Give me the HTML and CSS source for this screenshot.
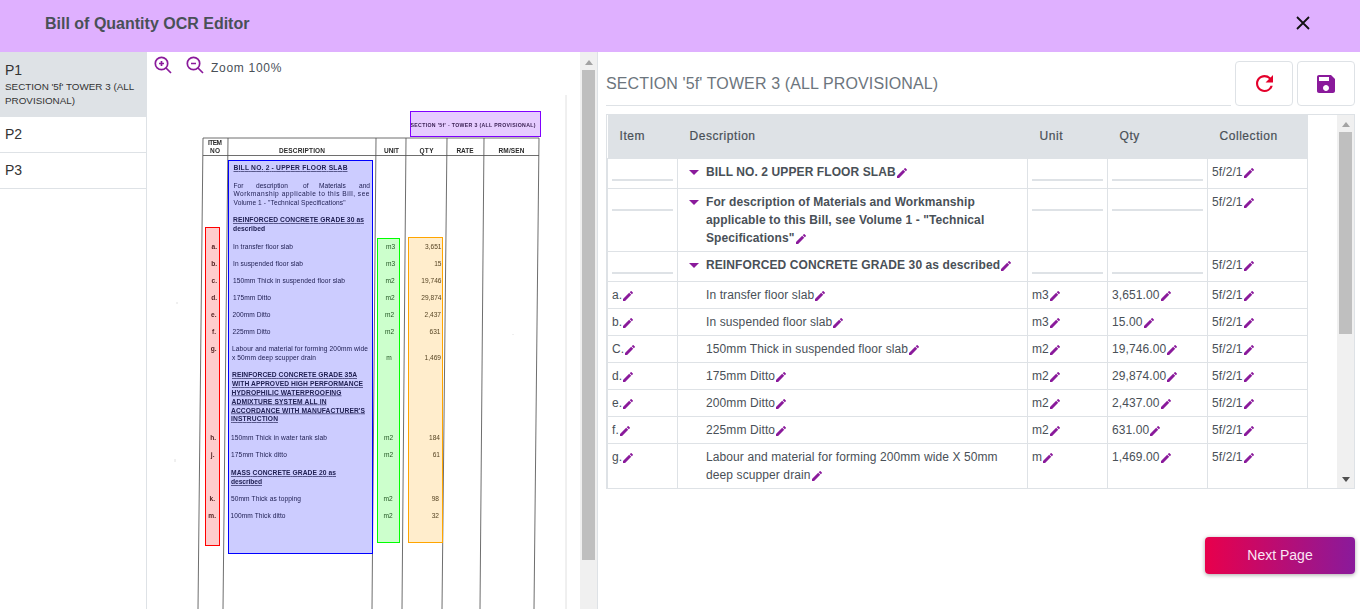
FILE: index.html
```html
<!DOCTYPE html>
<html lang="en">
<head>
<meta charset="utf-8">
<title>Bill of Quantity OCR Editor</title>
<link rel="stylesheet" href="styles.css">
</head>
<body>
<svg class="defs" width="0" height="0" aria-hidden="true">
  <symbol id="pen" viewBox="3 3 18 18"><path d="M20.71 7.04c.39-.39.39-1.04 0-1.41l-2.34-2.34c-.37-.39-1.02-.39-1.41 0l-1.84 1.83 3.75 3.75M3 17.25V21h3.75L17.81 9.93l-3.75-3.75L3 17.25z"/></symbol>
</svg>
<header class="topbar">
  <h1 class="title">Bill of Quantity OCR Editor</h1>
  <svg class="close" viewBox="0 0 14 14"><path d="M1 1l12 12M13 1L1 13"/></svg>
</header>
<main class="main">
  <nav class="pages">
    <div class="page active"><div class="page-no">P1</div><div class="page-sub">SECTION '5f' TOWER 3 (ALL PROVISIONAL)</div></div>
    <div class="page"><div class="page-no">P2</div></div>
    <div class="page"><div class="page-no">P3</div></div>
  </nav>
  <section class="viewer">
    <div class="canvas">
      <div class="zoombar">
        <svg class="zi" viewBox="0 0 18 18"><circle cx="7.5" cy="7.5" r="6.2"/><path d="M12 12l5 5M7.5 5v5M5 7.5h5"/></svg>
        <svg class="zi" viewBox="0 0 18 18"><circle cx="7.5" cy="7.5" r="6.2"/><path d="M12 12l5 5M5 7.5h5"/></svg>
        <span class="zoomtext">Zoom 100%</span>
      </div>
      <svg class="doc" viewBox="147 52 433 557" width="433" height="557">
        <g class="rules">
          <path d="M203 138H539M203 155.5H539"/>
          <path d="M203 138L198 609M228 138L223 609M376 138L372 609M406 138L402 609M447 138L442 609M484 138L480 609M539 138L534 609"/>
        </g>
        <path class="faint" d="M566 95V609M177 302v2M175 459v3M513 334v1"/>
        <g class="scan">
          <text class="sp" x="410.5" y="127" textLength="125">SECTION '5f' - TOWER 3 (ALL PROVISIONAL)</text>
          <text class="sb" x="208" y="144.5" textLength="14">ITEM</text>
          <text class="sb" x="210" y="153" textLength="10">NO</text>
          <text class="sb" x="279" y="153" textLength="46">DESCRIPTION</text>
          <text class="sb" x="384" y="153" textLength="15">UNIT</text>
          <text class="sb" x="419.5" y="153" textLength="14">QTY</text>
          <text class="sb" x="456.5" y="153" textLength="17">RATE</text>
          <text class="sb" x="498.5" y="153" textLength="26">RM/SEN</text>

          <text class="dh" x="233.5" y="170" textLength="114">BILL NO. 2 - UPPER FLOOR SLAB</text>
          <text class="dt" y="187.5"><tspan x="233.5">For</tspan><tspan x="256">description</tspan><tspan x="303">of</tspan><tspan x="319">Materials</tspan><tspan x="359">and</tspan></text>
          <text class="dt" x="233.5" y="196" textLength="136">Workmanship applicable to this Bill, see</text>
          <text class="dt" x="233.5" y="204.5" textLength="112">Volume 1 - "Technical Specifications"</text>
          <text class="dh" x="233" y="222" textLength="131">REINFORCED CONCRETE GRADE 30 as</text>
          <text class="dh" x="233" y="231" textLength="32">described</text>
          <g transform="translate(0 1)">
          <text class="dt" x="233" y="248" textLength="60">In transfer floor slab</text>
          <text class="dt" x="233" y="265" textLength="70">In suspended floor slab</text>
          <text class="dt" x="233" y="282" textLength="112">150mm Thick in suspended floor slab</text>
          <text class="dt" x="233" y="299" textLength="38">175mm Ditto</text>
          <text class="dt" x="232.5" y="316" textLength="38">200mm Ditto</text>
          <text class="dt" x="232.5" y="333" textLength="38">225mm Ditto</text>
          <text class="dt" x="232" y="350" textLength="136">Labour and material for forming 200mm wide</text>
          <text class="dt" x="232" y="359" textLength="84">x 50mm deep scupper drain</text>
          <text class="dh" x="232" y="376" textLength="125">REINFORCED CONCRETE GRADE 35A</text>
          <text class="dh" x="232" y="385" textLength="131">WITH APPROVED HIGH PERFORMANCE</text>
          <text class="dh" x="231.5" y="393.5" textLength="110">HYDROPHILIC WATERPROOFING</text>
          <text class="dh" x="231.5" y="402.5" textLength="95">ADMIXTURE SYSTEM ALL IN</text>
          <text class="dh" x="231" y="411.5" textLength="134">ACCORDANCE WITH MANUFACTURER'S</text>
          <text class="dh" x="231" y="420" textLength="47">INSTRUCTION</text>
          <text class="dt" x="231" y="439" textLength="96">150mm Thick in water tank slab</text>
          <text class="dt" x="231" y="456" textLength="56">175mm Thick ditto</text>
          <text class="dh" x="231" y="474" textLength="105">MASS CONCRETE GRADE 20 as</text>
          <text class="dh" x="231" y="483" textLength="31">described</text>
          <text class="dt" x="231" y="500" textLength="70">50mm Thick as topping</text>
          <text class="dt" x="230.5" y="517" textLength="55">100mm Thick ditto</text>

          <g class="it">
            <text x="217" y="248">a.</text><text x="217" y="265">b.</text><text x="217" y="282">c.</text><text x="217" y="299">d.</text>
            <text x="216.5" y="316">e.</text><text x="216" y="333">f.</text><text x="216.5" y="350">g.</text><text x="216" y="439">h.</text>
            <text x="214.5" y="456">j.</text><text x="215" y="500">k.</text><text x="216" y="517">m.</text>
          </g>
          <g class="un">
            <text x="390.5" y="248">m3</text><text x="390.5" y="265">m3</text><text x="390" y="282">m2</text><text x="390" y="299">m2</text>
            <text x="389.5" y="316">m2</text><text x="389.5" y="333">m2</text><text x="389" y="359">m</text><text x="388.5" y="439">m2</text>
            <text x="388.5" y="456">m2</text><text x="388" y="500">m2</text><text x="388" y="517">m2</text>
          </g>
          <g class="qt">
            <text x="441.5" y="248">3,651</text><text x="441.5" y="265">15</text><text x="441.5" y="282">19,746</text><text x="441.5" y="299">29,874</text>
            <text x="441" y="316">2,437</text><text x="440.5" y="333">631</text><text x="441" y="359">1,469</text><text x="440" y="439">184</text>
            <text x="440" y="456">61</text><text x="439" y="500">98</text><text x="439" y="517">32</text>
          </g>
          </g>
        </g>
        <rect class="box b-purple" x="410.5" y="111.5" width="130" height="25"/>
        <rect class="box b-red" x="205.5" y="227.5" width="14" height="318"/>
        <rect class="box b-blue" x="228.5" y="160.5" width="144" height="393"/>
        <rect class="box b-green" x="377.5" y="238.5" width="22" height="304"/>
        <rect class="box b-orange" x="408.5" y="237.5" width="34" height="305"/>
      </svg>
    </div>
    <div class="vbar vbar-doc"><i class="up"></i><div class="thumb thumb-doc"></div></div>
  </section>
  <section class="editor">
    <div class="toolbar">
      <div class="section-name">SECTION '5f' TOWER 3 (ALL PROVISIONAL)</div>
      <button class="tool" type="button"><svg class="ic-refresh" viewBox="4 4 16 16"><path d="M17.65 6.35A7.958 7.958 0 0 0 12 4c-4.42 0-7.99 3.58-7.99 8s3.57 8 7.99 8c3.73 0 6.84-2.55 7.73-6h-2.08A5.99 5.99 0 0 1 12 18c-3.31 0-6-2.69-6-6s2.69-6 6-6c1.66 0 3.14.69 4.22 1.78L13 11h7V4l-2.35 2.35z"/></svg></button>
      <button class="tool" type="button"><svg class="ic-save" viewBox="3 3 18 18"><path d="M17 3H5c-1.11 0-2 .9-2 2v14c0 1.1.89 2 2 2h14c1.1 0 2-.9 2-2V7l-4-4zm-5 16c-1.66 0-3-1.34-3-3s1.34-3 3-3 3 1.34 3 3-1.34 3-3 3zm3-10H5V5h10v4z"/></svg></button>
    </div>
    <div class="tablebox">
      <table class="boq">
        <colgroup><col class="c1"><col class="c2"><col class="c3"><col class="c4"><col class="c5"></colgroup>
        <thead><tr><th>Item</th><th>Description</th><th>Unit</th><th>Qty</th><th>Collection</th></tr></thead>
        <tbody>
          <tr>
            <td><input class="blank" aria-label="Item"></td>
            <td class="desc head"><div class="dwrap"><i class="caret"></i><div>BILL NO. 2 UPPER FLOOR SLAB<svg class="pen"><use href="#pen"/></svg></div></div></td>
            <td><input class="blank" aria-label="Unit"></td>
            <td><input class="blank" aria-label="Qty"></td>
            <td>5f/2/1<svg class="pen"><use href="#pen"/></svg></td>
          </tr>
          <tr>
            <td><input class="blank" aria-label="Item"></td>
            <td class="desc head"><div class="dwrap"><i class="caret"></i><div>For description of Materials and Workmanship applicable to this Bill, see Volume 1 - "Technical Specifications"<svg class="pen"><use href="#pen"/></svg></div></div></td>
            <td><input class="blank" aria-label="Unit"></td>
            <td><input class="blank" aria-label="Qty"></td>
            <td>5f/2/1<svg class="pen"><use href="#pen"/></svg></td>
          </tr>
          <tr>
            <td><input class="blank" aria-label="Item"></td>
            <td class="desc head"><div class="dwrap"><i class="caret"></i><div>REINFORCED CONCRETE GRADE 30 as described<svg class="pen"><use href="#pen"/></svg></div></div></td>
            <td><input class="blank" aria-label="Unit"></td>
            <td><input class="blank" aria-label="Qty"></td>
            <td>5f/2/1<svg class="pen"><use href="#pen"/></svg></td>
          </tr>
          <tr><td>a.<svg class="pen"><use href="#pen"/></svg></td><td class="desc">In transfer floor slab<svg class="pen"><use href="#pen"/></svg></td><td>m3<svg class="pen"><use href="#pen"/></svg></td><td>3,651.00<svg class="pen"><use href="#pen"/></svg></td><td>5f/2/1<svg class="pen"><use href="#pen"/></svg></td></tr>
          <tr><td>b.<svg class="pen"><use href="#pen"/></svg></td><td class="desc">In suspended floor slab<svg class="pen"><use href="#pen"/></svg></td><td>m3<svg class="pen"><use href="#pen"/></svg></td><td>15.00<svg class="pen"><use href="#pen"/></svg></td><td>5f/2/1<svg class="pen"><use href="#pen"/></svg></td></tr>
          <tr><td>C.<svg class="pen"><use href="#pen"/></svg></td><td class="desc">150mm Thick in suspended floor slab<svg class="pen"><use href="#pen"/></svg></td><td>m2<svg class="pen"><use href="#pen"/></svg></td><td>19,746.00<svg class="pen"><use href="#pen"/></svg></td><td>5f/2/1<svg class="pen"><use href="#pen"/></svg></td></tr>
          <tr><td>d.<svg class="pen"><use href="#pen"/></svg></td><td class="desc">175mm Ditto<svg class="pen"><use href="#pen"/></svg></td><td>m2<svg class="pen"><use href="#pen"/></svg></td><td>29,874.00<svg class="pen"><use href="#pen"/></svg></td><td>5f/2/1<svg class="pen"><use href="#pen"/></svg></td></tr>
          <tr><td>e.<svg class="pen"><use href="#pen"/></svg></td><td class="desc">200mm Ditto<svg class="pen"><use href="#pen"/></svg></td><td>m2<svg class="pen"><use href="#pen"/></svg></td><td>2,437.00<svg class="pen"><use href="#pen"/></svg></td><td>5f/2/1<svg class="pen"><use href="#pen"/></svg></td></tr>
          <tr><td>f.<svg class="pen"><use href="#pen"/></svg></td><td class="desc">225mm Ditto<svg class="pen"><use href="#pen"/></svg></td><td>m2<svg class="pen"><use href="#pen"/></svg></td><td>631.00<svg class="pen"><use href="#pen"/></svg></td><td>5f/2/1<svg class="pen"><use href="#pen"/></svg></td></tr>
          <tr><td>g.<svg class="pen"><use href="#pen"/></svg></td><td class="desc">Labour and material for forming 200mm wide X 50mm deep scupper drain<svg class="pen"><use href="#pen"/></svg></td><td>m<svg class="pen"><use href="#pen"/></svg></td><td>1,469.00<svg class="pen"><use href="#pen"/></svg></td><td>5f/2/1<svg class="pen"><use href="#pen"/></svg></td></tr>
        </tbody>
      </table>
      <div class="vbar vbar-table"><i class="up"></i><div class="thumb thumb-table"></div><i class="down"></i></div>
    </div>
    <div class="actions"><button class="next" type="button">Next Page</button></div>
  </section>
</main>
</body>
</html>
```

FILE: styles.css
```css
* { box-sizing: border-box; }
html, body { margin: 0; height: 100%; overflow: hidden; }
body { font-family: "Liberation Sans", Arial, sans-serif; color: #495057; background: #fff; display: flex; flex-direction: column; }
.defs { position: absolute; }

.topbar { height: 52px; flex: none; background: #dfb0ff; display: flex; align-items: center; justify-content: space-between; padding: 0 50px 4px 45px; }
.title { margin: 0; font-size: 16px; font-weight: 700; color: #495057; }
.close { width: 14px; height: 14px; margin-top: -2px; }
.close path { stroke: #111; stroke-width: 1.8; fill: none; }

.main { flex: 1; display: flex; min-height: 0; }

.pages { width: 147px; flex: none; border-right: 1px solid #dee2e6; }
.page { height: 36px; padding: 8px 5px 0; border-bottom: 1px solid #dee2e6; color: #333; }
.page.active { height: 65px; padding-top: 9px; background: #dee2e6; border-bottom: 0; }
.page-no { font-size: 14px; line-height: 18px; }
.page-sub { font-size: 9.85px; line-height: 14px; margin-top: 1px; color: #333; }

.viewer { width: 451px; flex: none; display: flex; border-right: 1px solid #dee2e6; }
.canvas { width: 433px; position: relative; overflow: hidden; }
.zoombar { position: absolute; left: 7px; top: 4px; display: flex; align-items: flex-start; gap: 14px; }
.zi { width: 18px; height: 18px; fill: none; stroke: #8a1a9b; stroke-width: 1.7; }
.zoomtext { font-size: 12px; line-height: 14px; letter-spacing: .7px; margin-left: -7px; padding-top: 5px; color: #495057; }
.doc { display: block; }

.rules path { stroke: #555; stroke-width: 1; fill: none; opacity: .85; }
.faint { stroke: #ccc; stroke-width: 1; fill: none; opacity: .6; }
.scan { filter: blur(.25px); font-family: "Liberation Sans", Arial, sans-serif; fill: #2a2a2a; }
.sp { font-size: 5.2px; font-weight: 700; }
.sb { font-size: 6.5px; font-weight: 700; }
.dt { font-size: 6.6px; }
.dh { font-size: 6.7px; font-weight: 700; text-decoration: underline; }
.it text { font-size: 6.6px; font-weight: 700; text-anchor: end; }
.un text { font-size: 6.6px; text-anchor: middle; }
.qt text { font-size: 6.6px; text-anchor: end; }

.box { stroke-width: 1; }
.b-purple { fill: rgba(128, 0, 255, .2); stroke: #8000ff; }
.b-red { fill: rgba(255, 0, 0, .2); stroke: #f00; }
.b-blue { fill: rgba(0, 0, 255, .2); stroke: #00f; }
.b-green { fill: rgba(0, 255, 0, .2); stroke: #0f0; }
.b-orange { fill: rgba(255, 165, 0, .2); stroke: #ffa500; }

.vbar { width: 17px; flex: none; background: #f0f0f0; display: flex; flex-direction: column; align-items: center; }
.thumb { width: 13px; background: #bfbfbf; flex: none; }
.up { width: 0; height: 0; flex: none; border: 4.5px solid transparent; border-top: 0; border-bottom: 5px solid #a3a3a3; }
.down { width: 0; height: 0; flex: none; margin-top: auto; margin-bottom: 6px; border: 4.5px solid transparent; border-bottom: 0; border-top: 5px solid #505050; }
.vbar-doc { padding-top: 8px; }
.thumb-doc { height: 490px; margin-top: 5px; }
.vbar-table { padding-top: 7px; }
.thumb-table { height: 202px; margin-top: 5px; }

.editor { flex: 1; min-width: 0; padding: 9px 5px 0 8px; display: flex; flex-direction: column; }
.toolbar { display: flex; gap: 4px; height: 45px; }
.section-name { flex: 1; font-size: 16px; line-height: 44px; padding-top: 1px; color: #6c757d; border-bottom: 1px solid #dee2e6; letter-spacing: .12px; white-space: nowrap; }
.tool { width: 58px; height: 45px; padding: 0; background: #fff; border: 1px solid #dee2e6; border-radius: 4px; display: flex; align-items: center; justify-content: center; }
.ic-refresh { width: 17px; height: 17px; fill: #e4002b; }
.ic-save { width: 18px; height: 18px; fill: #8a1a9b; }

.tablebox { margin-top: 8px; height: 375px; display: flex; justify-content: space-between; align-items: stretch; border: 1px solid #dee2e6; overflow: hidden; }
.boq { width: 701px; table-layout: fixed; border-collapse: collapse; font-size: 12px; line-height: 18px; letter-spacing: .1px; color: #495057; align-self: flex-start; }
.c1 { width: 70px; } .c2 { width: 350px; } .c3 { width: 80px; } .c4 { width: 100px; } .c5 { width: 100px; }
.boq th { height: 43px; background: #dee2e6; font-weight: 400; text-align: left; padding: 0 12px; letter-spacing: .55px; -webkit-text-stroke: .2px #495057; }
.boq td { border: 1px solid #dee2e6; padding: 4px; vertical-align: top; }
.boq td.desc { padding-left: 28px; }
.boq td.desc.head { padding: 4px 4px 4px 11px; font-weight: 700; }
.dwrap { display: flex; }
.caret { flex: none; width: 0; height: 0; margin: 7px 7px 0 0; border: 5px solid transparent; border-bottom: 0; border-top: 5px solid #8a1a9b; }
.blank { display: block; width: 100%; height: 18px; margin-bottom: 3px; padding: 0; border: 0; border-bottom: 2px solid #dee2e6; background: transparent; outline: 0; }
.pen { width: 10px; height: 10px; margin-left: 1px; vertical-align: -2px; fill: #8a1a9b; }

.actions { display: flex; justify-content: flex-end; margin-top: 48px; }
.next { width: 150px; height: 37px; padding: 0 0 2px; border: 0; border-radius: 4px; background: linear-gradient(90deg, #e8004c, #8a1a9b); color: #fbe6f5; font-family: inherit; font-size: 14px; box-shadow: 0 1px 4px rgba(0, 0, 0, .35); }
```
